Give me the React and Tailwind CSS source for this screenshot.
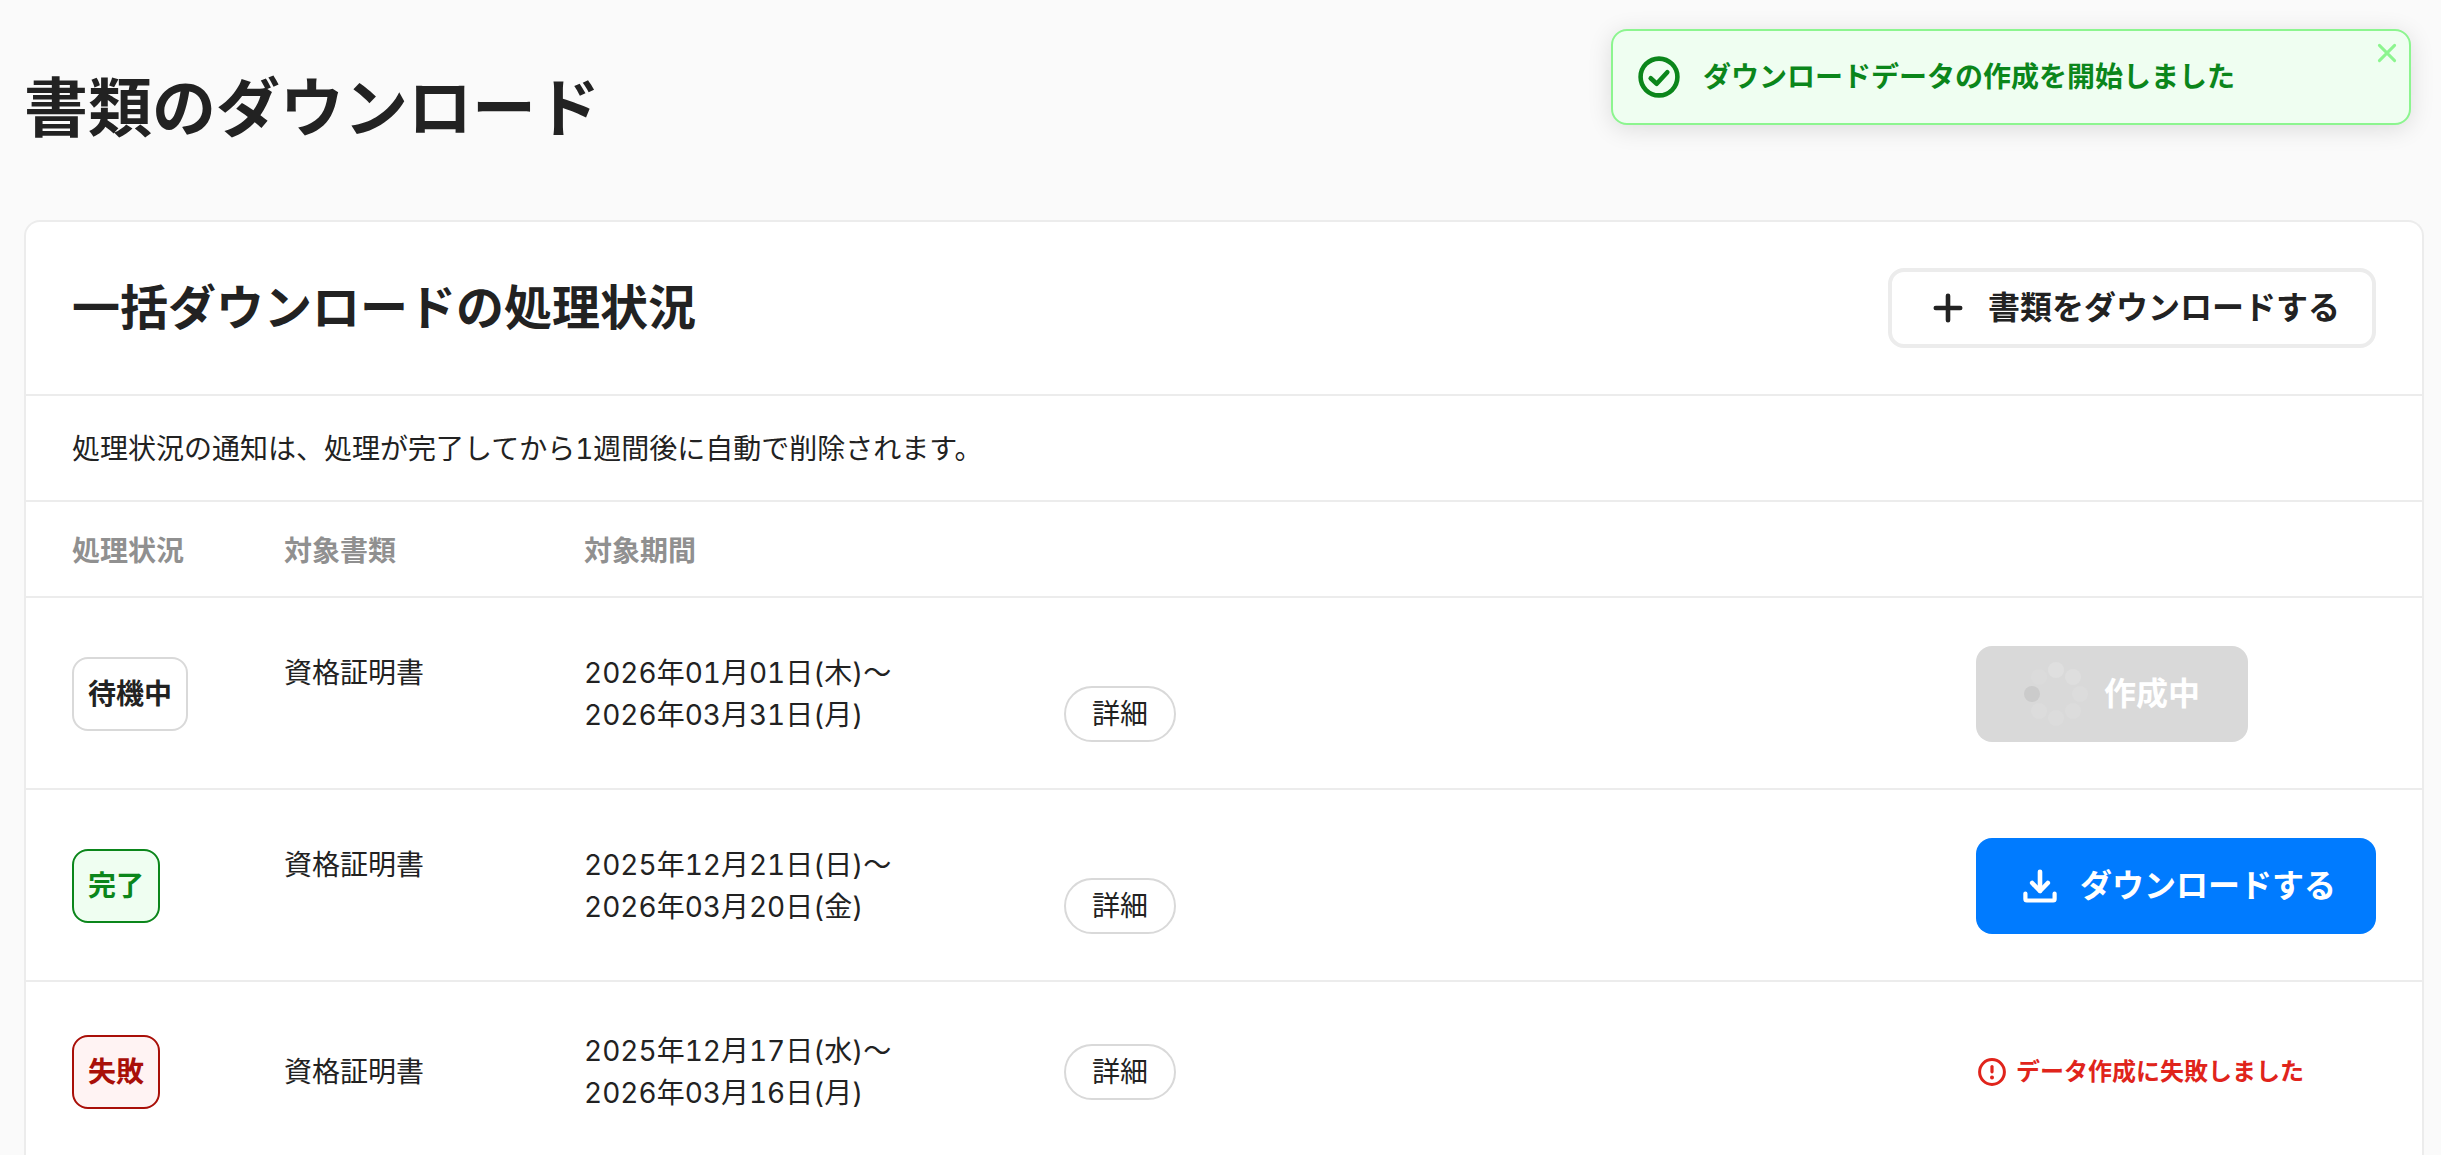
import React, { useState } from 'react';

const DOWNLOADS = [
  { id: 1, status: 'waiting', document: '資格証明書', from: '2026年01月01日(木)', to: '2026年03月31日(月)' },
  { id: 2, status: 'done', document: '資格証明書', from: '2025年12月21日(日)', to: '2026年03月20日(金)' },
  { id: 3, status: 'failed', document: '資格証明書', from: '2025年12月17日(水)', to: '2026年03月16日(月)' },
];

const STATUS = {
  waiting: { label: '待機中', className: 'border-[#d9d9d9] bg-white text-[#222]' },
  done: { label: '完了', className: 'border-[#0b861b] bg-[#effef1] text-[#0b861b]' },
  failed: { label: '失敗', className: 'border-[#a90f08] bg-[#fff3f3] text-[#a90f08]' },
};

// clockwise from the top
const SPINNER_DOTS = [
  { cx: 32, cy: 8, fill: '#dfdfdf' },
  { cx: 49, cy: 15, fill: '#dedede' },
  { cx: 56, cy: 32, fill: '#dcdcdc' },
  { cx: 49, cy: 49, fill: '#dcdcdc' },
  { cx: 32, cy: 56, fill: '#dcdcdc' },
  { cx: 15, cy: 49, fill: '#dcdcdc' },
  { cx: 8, cy: 32, fill: '#cbcbcb' },
  { cx: 15, cy: 15, fill: '#dbdbdb' },
];

function PlusIcon() {
  return (
    <svg className="size-12 shrink-0" viewBox="0 0 48 48" fill="none" stroke="currentColor" strokeWidth="4.6" strokeLinecap="round" aria-hidden="true">
      <path d="M24 11.8v24.4M11.8 24h24.4" />
    </svg>
  );
}

function DownloadIcon() {
  return (
    <svg className="size-12 shrink-0" viewBox="0 0 48 48" fill="none" stroke="currentColor" strokeWidth="4.6" strokeLinecap="round" strokeLinejoin="round" aria-hidden="true">
      <path d="M24 9.8v19" />
      <path d="M16.2 21l7.8 8 7.8-8" />
      <path d="M9.4 31.5v5.6a1.4 1.4 0 0 0 1.4 1.4h26.4a1.4 1.4 0 0 0 1.4-1.4v-5.6" strokeWidth="4.2" />
    </svg>
  );
}

function CheckCircleIcon() {
  return (
    <svg className="size-12 shrink-0" viewBox="0 0 48 48" fill="none" stroke="currentColor" strokeWidth="4.6" strokeLinecap="round" strokeLinejoin="round" aria-hidden="true">
      <circle cx="24" cy="24" r="18.4" />
      <path d="M15.7 25.2l6 5.6 10.6-11.6" />
    </svg>
  );
}

function AlertCircleIcon() {
  return (
    <svg className="size-8 shrink-0" viewBox="0 0 32 32" fill="none" stroke="currentColor" strokeLinecap="round" aria-hidden="true">
      <circle cx="16" cy="16" r="12.4" strokeWidth="3" />
      <path d="M16 10.6v5.2" strokeWidth="3.2" />
      <circle cx="16" cy="21.4" r="2" fill="currentColor" stroke="none" />
    </svg>
  );
}

function Spinner() {
  return (
    <svg className="size-16 shrink-0" viewBox="0 0 64 64" aria-hidden="true">
      {SPINNER_DOTS.map((dot) => (
        <circle key={`${dot.cx}-${dot.cy}`} cx={dot.cx} cy={dot.cy} r="8" fill={dot.fill} />
      ))}
    </svg>
  );
}

function Toast({ message, onClose }) {
  return (
    <div role="status" className="absolute top-[29px] right-[30px] flex h-24 w-[800px] items-center gap-5 rounded-2xl border-2 border-[#8cf58f] bg-[#effef1] px-[22px] text-[#0b861b] shadow-[0_4px_24px_rgba(0,0,0,0.12)]">
      <CheckCircleIcon />
      <p className="font-bold">{message}</p>
      <button type="button" aria-label="閉じる" onClick={onClose} className="absolute top-1.5 right-1.5 cursor-pointer text-[#8cf58f]">
        <svg className="size-8" viewBox="0 0 32 32" fill="none" stroke="currentColor" strokeWidth="3" strokeLinecap="round" aria-hidden="true">
          <path d="M8.4 8.4l15.2 15.2M23.6 8.4L8.4 23.6" />
        </svg>
      </button>
    </div>
  );
}

function Action({ status }) {
  if (status === 'waiting') {
    return (
      <button type="button" disabled className="flex h-24 items-center gap-4 rounded-2xl bg-[#d9d9d9] px-12 text-[32px] font-bold text-white">
        <Spinner />
        作成中
      </button>
    );
  }
  if (status === 'done') {
    return (
      <button type="button" className="flex h-24 cursor-pointer items-center gap-4 rounded-2xl bg-[#007bff] px-10 text-[32px] font-bold text-white">
        <DownloadIcon />
        ダウンロードする
      </button>
    );
  }
  return (
    <p className="flex items-center gap-2 text-2xl font-bold text-[#e0241b]">
      <AlertCircleIcon />
      データ作成に失敗しました
    </p>
  );
}

function DownloadRow({ item }) {
  const status = STATUS[item.status];
  const failed = item.status === 'failed';

  return (
    <tr className="*:border-b-2 *:border-[#ececec] *:pt-12 *:pb-[46px]">
      <td className="pl-[46px]">
        <span className={`inline-flex h-[74px] items-center rounded-2xl border-2 px-[14px] align-middle font-bold ${status.className}`}>
          {status.label}
        </span>
      </td>
      <td>
        <div className={failed ? '' : 'min-h-21'}>{item.document}</div>
      </td>
      <td className="tabular-nums">
        {item.from}〜<br />
        {item.to}
      </td>
      <td className={failed ? 'align-middle' : 'align-bottom'}>
        <button type="button" className="flex h-14 cursor-pointer items-center rounded-full border-2 border-[#d9d9d9] bg-white px-[26px]">
          詳細
        </button>
      </td>
      <td>
        <Action status={item.status} />
      </td>
    </tr>
  );
}

export default function App() {
  const [toastOpen, setToastOpen] = useState(true);

  return (
    <div className="relative min-h-screen bg-[#fafafa] pr-[17px] pl-6 font-['Inter','Noto_Sans_CJK_JP',sans-serif] text-[28px] leading-[42px] text-[#222]" lang="ja">
      <h1 className="pt-15 pb-16 text-[64px] leading-24 font-bold">書類のダウンロード</h1>

      {toastOpen && <Toast message="ダウンロードデータの作成を開始しました" onClose={() => setToastOpen(false)} />}

      <section className="rounded-t-2xl border-2 border-b-0 border-[#ececec] bg-white">
        <div className="flex items-center justify-between border-b-2 border-[#ececec] p-[46px]">
          <h2 className="text-5xl font-bold">一括ダウンロードの処理状況</h2>
          <button type="button" className="flex h-20 cursor-pointer items-center gap-4 rounded-2xl border-4 border-[#ececec] bg-white px-8 text-[32px] font-bold">
            <PlusIcon />
            書類をダウンロードする
          </button>
        </div>

        <p className="border-b-2 border-[#ececec] px-[46px] pt-8 pb-[30px] tabular-nums">
          処理状況の通知は、処理が完了してから1週間後に自動で削除されます。
        </p>

        <table className="w-full table-fixed border-separate border-spacing-0">
          <thead>
            <tr className="text-left text-[#909090] *:border-b-2 *:border-[#ececec] *:pt-7 *:pb-6">
              <th className="w-[258px] pl-[46px]">処理状況</th>
              <th className="w-[300px]">対象書類</th>
              <th className="w-[480px]">対象期間</th>
              <th aria-label="詳細" />
              <th className="w-[446px]" aria-label="操作" />
            </tr>
          </thead>
          <tbody>
            {DOWNLOADS.map((item) => (
              <DownloadRow key={item.id} item={item} />
            ))}
          </tbody>
        </table>
      </section>
    </div>
  );
}
